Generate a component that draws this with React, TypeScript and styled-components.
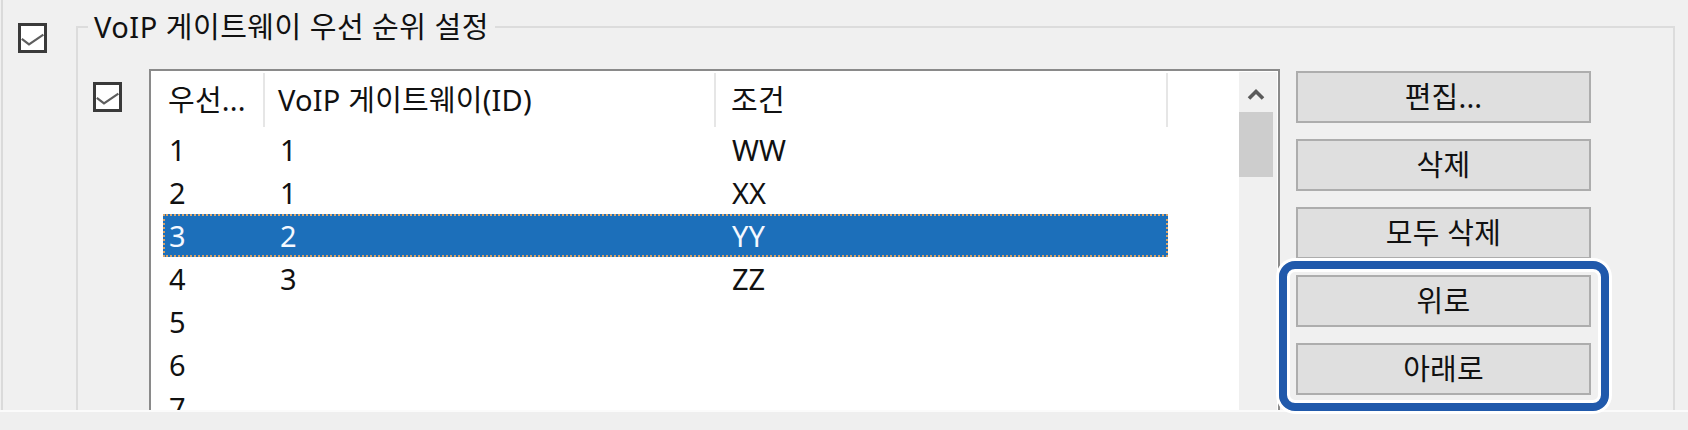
import React from "react";
import styled, { createGlobalStyle } from "styled-components";

const Global = createGlobalStyle`
  html, body { margin: 0; padding: 0; background: #f0f0f0; }
  body {
    width: 1688px;
    height: 430px;
    overflow: hidden;
    font-family: "Noto Sans", "Noto Sans CJK KR", sans-serif;
    color: #111;
  }
`;

const FONT_SIZE = 29;

const Page = styled.div`
  width: 1688px;
  height: 430px;
  display: flex;
  flex-direction: column;
  background: #f0f0f0;
`;

const Main = styled.div`
  height: 410px;
  box-sizing: border-box;
  display: flex;
  align-items: flex-start;
  margin-left: 1px;
  border-left: 2px solid #dadada;
  padding-top: 12px;
`;

const BottomStrip = styled.div`
  flex: 1;
  border-top: 2px solid #fbfbfb;
  background: #efefef;
`;

const CheckBox = styled.span<{ $top: number; $left: number }>`
  flex-shrink: 0;
  width: 29px;
  height: 30px;
  box-sizing: border-box;
  border: 3px solid #3a3a3a;
  background: #fff;
  display: flex;
  align-items: flex-start;
  justify-content: center;
  margin-top: ${(p) => p.$top}px;
  margin-left: ${(p) => p.$left}px;
  svg { display: block; }
`;

const GroupBox = styled.fieldset`
  margin: 0 0 0 29px;
  padding: 0;
  min-width: 0;
  width: 1599px;
  height: 398px;
  box-sizing: border-box;
  border: 2px solid #dcdcdc;
  border-bottom: none;
`;

const Legend = styled.legend`
  margin-left: 10px;
  padding: 0 6px;
  font-size: ${FONT_SIZE}px;
  letter-spacing: 0.5px;
  line-height: 30px;
  color: #111;
`;

const GroupContent = styled.div`
  display: flex;
  align-items: flex-start;
  padding: 27px 0 0 15px;
`;

const ListBox = styled.div`
  margin-left: 27px;
  width: 1131px;
  height: 341px;
  box-sizing: border-box;
  border: 2px solid #8a8a8a;
  border-bottom: none;
  padding: 1px 1px 0 1px;
  background: #fff;
  display: flex;
  overflow: hidden;
`;

const ListArea = styled.div`
  flex: 1;
  background: #fff;
  overflow: hidden;
`;

const HeaderRow = styled.div`
  height: 56px;
  display: flex;
  align-items: center;
`;

const HeaderCell = styled.div<{ $w: number; $pad: number; $divider?: boolean }>`
  width: ${(p) => p.$w}px;
  height: 54px;
  box-sizing: border-box;
  padding-left: ${(p) => p.$pad}px;
  border-right: ${(p) => (p.$divider ? "2px solid #e6e6e6" : "none")};
  font-size: ${FONT_SIZE}px;
  letter-spacing: 0.2px;
  line-height: 54px;
  white-space: nowrap;
  overflow: hidden;
`;

const Row = styled.div<{ $selected?: boolean }>`
  margin-left: 11px;
  width: 1005px;
  height: 43px;
  box-sizing: border-box;
  display: flex;
  align-items: center;
  background: ${(p) => (p.$selected ? "#1c6fba" : "transparent")};
  color: ${(p) => (p.$selected ? "#f4f8ff" : "#111")};
  outline: ${(p) => (p.$selected ? "2px dotted #d8a46a" : "none")};
  outline-offset: -2px;
`;

const Cell = styled.div<{ $w: number; $pad: number }>`
  width: ${(p) => p.$w}px;
  box-sizing: border-box;
  padding-left: ${(p) => p.$pad}px;
  font-size: ${FONT_SIZE}px;
  line-height: 43px;
  white-space: nowrap;
`;

const ScrollBar = styled.div`
  width: 38px;
  box-sizing: border-box;
  padding-right: 4px;
  background: #f0f0f0;
  display: flex;
  flex-direction: column;
`;

const ScrollArrow = styled.div`
  height: 40px;
  display: flex;
  align-items: center;
  justify-content: center;
  padding-top: 4px;
  box-sizing: border-box;
`;

const ScrollThumb = styled.div`
  height: 65px;
  background: #cdcdcd;
`;

const ButtonColumn = styled.div`
  margin: 2px 0 0 16px;
  width: 295px;
  display: flex;
  flex-direction: column;
  gap: 16px;
`;

const Button = styled.button`
  height: 52px;
  width: 100%;
  box-sizing: border-box;
  margin: 0;
  padding: 0;
  border: 2px solid #adadad;
  background: #dfdfdf;
  font-family: "Noto Sans", "Noto Sans CJK KR", sans-serif;
  font-size: ${FONT_SIZE}px;
  letter-spacing: 0.2px;
  line-height: 48px;
  color: #111;
`;

const Highlight = styled.div`
  position: relative;
  display: flex;
  flex-direction: column;
  gap: 16px;
  &::after {
    content: "";
    position: absolute;
    top: -14px;
    bottom: -16px;
    left: -17px;
    right: -18px;
    border: 8px solid #2059ab;
    border-radius: 16px;
    box-shadow: 0 0 0 3px #ffffff, inset 0 0 0 3px #ffffff;
    pointer-events: none;
  }
`;

const Check = () => (
  <svg width="23" height="24" viewBox="0 0 23 24">
    <polyline
      points="0.8,12.8 8,18.4 22.4,8.6"
      fill="none"
      stroke="#5e5e5e"
      strokeWidth="2.2"
      strokeLinejoin="miter"
    />
  </svg>
);

const columns = [
  { w: 102, pad: 6 },
  { w: 451, pad: 15 },
  { w: 452, pad: 16 },
];

const rows: { cells: string[]; selected?: boolean }[] = [
  { cells: ["1", "1", "WW"] },
  { cells: ["2", "1", "XX"] },
  { cells: ["3", "2", "YY"], selected: true },
  { cells: ["4", "3", "ZZ"] },
  { cells: ["5", "", ""] },
  { cells: ["6", "", ""] },
  { cells: ["7", "", ""] },
];

export default function App() {
  return (
    <Page>
      <Global />
      <Main>
        <CheckBox $top={11} $left={15}>
          <Check />
        </CheckBox>
        <GroupBox>
          <Legend>VoIP 게이트웨이 우선 순위 설정</Legend>
          <GroupContent>
            <CheckBox $top={13} $left={0}>
              <Check />
            </CheckBox>
            <ListBox>
              <ListArea>
                <HeaderRow>
                  <HeaderCell $w={113} $pad={16} $divider>
                    우선...
                  </HeaderCell>
                  <HeaderCell $w={451} $pad={13} $divider>
                    VoIP 게이트웨이(ID)
                  </HeaderCell>
                  <HeaderCell $w={452} $pad={15} $divider>
                    조건
                  </HeaderCell>
                </HeaderRow>
                {rows.map((r, i) => (
                  <Row key={i} $selected={r.selected}>
                    {r.cells.map((c, j) => (
                      <Cell key={j} $w={columns[j].w} $pad={columns[j].pad}>
                        {c}
                      </Cell>
                    ))}
                  </Row>
                ))}
              </ListArea>
              <ScrollBar>
                <ScrollArrow>
                  <svg width="18" height="13" viewBox="0 0 18 13">
                    <polyline
                      points="2,10.5 9,3.5 16,10.5"
                      fill="none"
                      stroke="#5a5a5a"
                      strokeWidth="3.6"
                    />
                  </svg>
                </ScrollArrow>
                <ScrollThumb />
              </ScrollBar>
            </ListBox>
            <ButtonColumn>
              <Button>편집...</Button>
              <Button>삭제</Button>
              <Button>모두 삭제</Button>
              <Highlight>
                <Button>위로</Button>
                <Button>아래로</Button>
              </Highlight>
            </ButtonColumn>
          </GroupContent>
        </GroupBox>
      </Main>
      <BottomStrip />
    </Page>
  );
}
